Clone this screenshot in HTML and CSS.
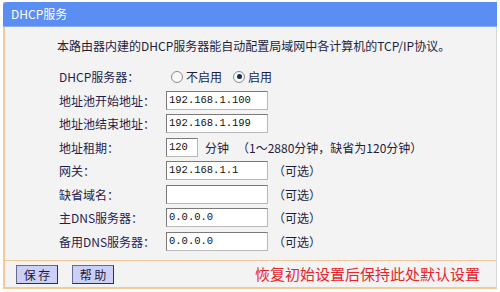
FILE: index.html
```html
<!DOCTYPE html>
<html lang="zh-CN">
<head>
<meta charset="utf-8">
<link rel="stylesheet" href="styles.css">
</head>
<body>
<div class="panel">
  <div class="title">DHCP服务</div>
  <div class="content">
    <p class="desc">本路由器内建的DHCP服务器能自动配置局域网中各计算机的TCP/IP协议。</p>
    <div class="form">
      <div class="label">DHCP服务器：</div>
      <div class="field">
        <span class="radio"></span><span class="rtext">不启用</span>
        <span class="radio on"></span><span class="rtext">启用</span>
      </div>
      <div class="label">地址池开始地址：</div>
      <div class="field"><span class="input">192.168.1.100</span></div>
      <div class="label">地址池结束地址：</div>
      <div class="field"><span class="input">192.168.1.199</span></div>
      <div class="label">地址租期：</div>
      <div class="field"><span class="input short">120</span><span class="unit">分钟</span><span class="hint">（1～2880分钟，缺省为120分钟）</span></div>
      <div class="label">网关：</div>
      <div class="field"><span class="input">192.168.1.1</span><span class="opt">（可选）</span></div>
      <div class="label">缺省域名：</div>
      <div class="field"><span class="input"></span><span class="opt">（可选）</span></div>
      <div class="label">主DNS服务器：</div>
      <div class="field"><span class="input">0.0.0.0</span><span class="opt">（可选）</span></div>
      <div class="label">备用DNS服务器：</div>
      <div class="field"><span class="input">0.0.0.0</span><span class="opt">（可选）</span></div>
    </div>
  </div>
  <div class="footer">
    <span class="btn">保 存</span>
    <span class="btn">帮 助</span>
    <span class="notice">恢复初始设置后保持此处默认设置</span>
  </div>
</div>
</body>
</html>
```

FILE: styles.css
```css
html, body {
  margin: 0;
  padding: 0;
  background: #ffffff;
}
body {
  font-family: "Noto Sans CJK SC", "Noto Sans", sans-serif;
  font-size: 12px;
  color: #1a1a3a;
}
.panel {
  margin: 2px 3px 0 3px;
  width: 494px;
  height: 287px;
  box-sizing: border-box;
  background: #f3f3f3;
  border-left: 2px solid #f2c99a;
  border-right: 1px solid #d8d8d8;
  border-bottom: 2px solid #f2c99a;
  display: flex;
  flex-direction: column;
}
.title {
  height: 24px;
  margin-left: -2px;
  margin-right: -1px;
  background: #5b8ef3;
  border-top-left-radius: 4px;
  color: #ffffff;
  font-size: 12px;
  line-height: 24px;
  padding-left: 8px;
  border-bottom: 1px solid #8fb0f0;
}
.content {
  flex: 1;
  padding-left: 52px;
}
.desc {
  margin: 9px 0 0 0;
  height: 20px;
  line-height: 20px;
  font-size: 12px;
  color: #1e1e40;
}
.form {
  margin-top: 9px;
  display: grid;
  grid-template-columns: 109px 1fr;
  grid-auto-rows: 23.5px;
  align-items: center;
}
.label {
  padding-left: 2px;
  color: #1e1e50;
}
.field {
  display: flex;
  align-items: center;
}
.radio {
  width: 10px;
  height: 10px;
  border: 1px solid #8a8a8a;
  border-radius: 50%;
  background: #f8f8f8;
  margin-left: 5px;
  margin-right: 3px;
  display: inline-flex;
  align-items: center;
  justify-content: center;
  box-sizing: content-box;
}
.radio.on::after {
  content: "";
  width: 5px;
  height: 5px;
  border-radius: 50%;
  background: #1b2a5a;
}
.rtext {
  margin-right: 6px;
  color: #1e1e40;
}
.input {
  box-sizing: border-box;
  width: 102px;
  height: 19px;
  border: 1px solid #7a7a7a;
  border-right-color: #b8b8b8;
  border-bottom-color: #b8b8b8;
  background: #ffffff;
  font-family: "Liberation Mono", monospace;
  font-size: 10.5px;
  line-height: 17px;
  padding-left: 2px;
  color: #111;
}
.input.short {
  width: 32px;
}
.unit {
  margin-left: 7px;
  color: #1e1e40;
}
.hint {
  margin-left: 8px;
  color: #1e1e40;
}
.opt {
  margin-left: 5px;
  color: #1e1e40;
}
.footer {
  height: 26px;
  border-top: 1px solid #f2c99a;
  display: flex;
  align-items: center;
  padding-left: 11px;
  padding-right: 16px;
}
.btn {
  box-sizing: border-box;
  width: 42px;
  height: 19px;
  background: #cdd0f6;
  border: 1px solid #6a6a8a;
  border-right-color: #333;
  border-bottom-color: #333;
  font-size: 12px;
  line-height: 17px;
  text-align: center;
  color: #1a1a40;
  margin-right: 14px;
}
.notice {
  margin-left: auto;
  color: #e4262c;
  font-size: 15px;
  line-height: 20px;
}
```
